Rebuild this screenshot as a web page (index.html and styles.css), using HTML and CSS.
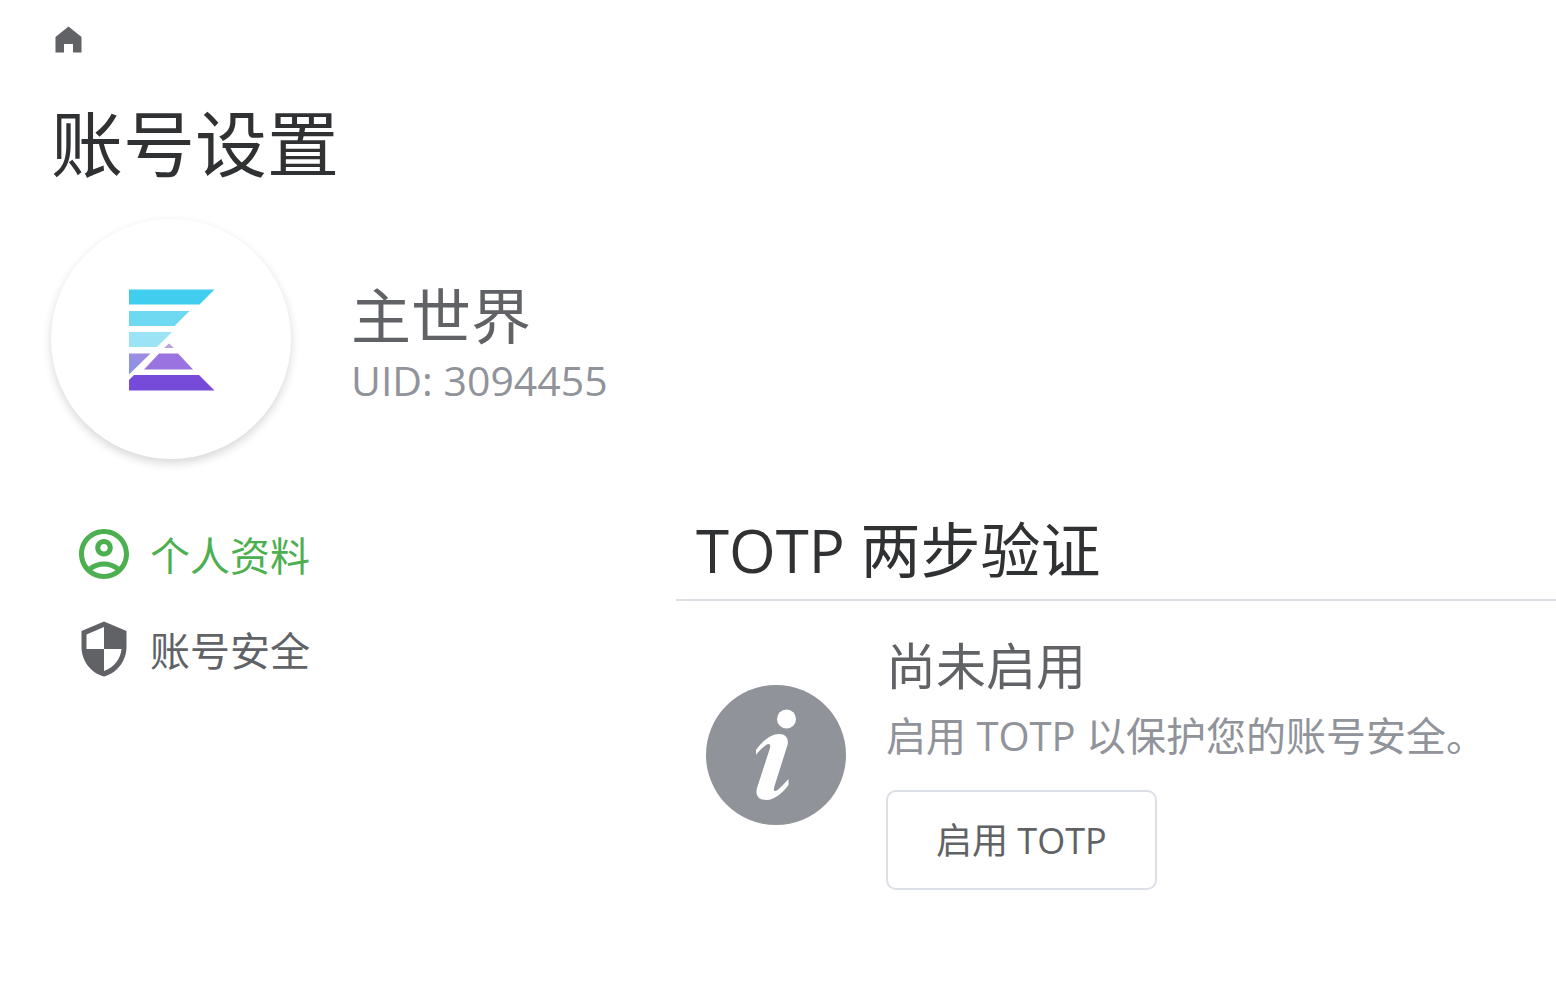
FILE: index.html
```html
<!DOCTYPE html>
<html lang="zh-CN">
<head>
<meta charset="utf-8">
<meta name="viewport" content="width=device-width, initial-scale=1">
<title>账号设置</title>
<link rel="stylesheet" href="styles.css">
</head>
<body>
<div class="page">
  <nav class="breadcrumb" aria-label="面包屑">
    <a class="home-link" href="#" aria-label="首页">
      <svg class="home-icon" viewBox="0 0 36 36" aria-hidden="true"><path d="M17.500 4.500 30.500 15v15.500h-8.500V22h-9v8.500H4.500V15z"/></svg>
    </a>
  </nav>
  <h1 class="page-title">账号设置</h1>
  <header class="profile">
    <div class="avatar">
      <svg class="avatar-logo" viewBox="0 0 240 240" role="img" aria-label="头像">
        <defs>
          <linearGradient id="violet" x1="0" y1="1" x2="1" y2="0"><stop offset="0" stop-color="#8a94e6"/><stop offset="1" stop-color="#a28be0"/></linearGradient>
        </defs>
        <path fill="#41cdee" d="M78 70.500h85.500L148.500 85.500H78z"/>
        <path fill="#6fd9f1" d="M78 92h60.500L123.500 107H78z"/>
        <path fill="#9ce4f5" d="M78 113h43L106 128H78z"/>
        <path fill="#b8a1dc" d="M118 124.500l5 4.500h-10z"/>
        <path fill="url(#violet)" d="M78 134.500h21.500L78 155.500z"/>
        <path fill="#9b73e0" d="M108 134.500h19L142 150.500H93z"/>
        <path fill="#764bd9" d="M83 156h65l15.500 15.500H78V161z"/>
      </svg>
    </div>
    <div class="identity">
      <p class="user-name">主世界</p>
      <p class="user-id">UID: 3094455</p>
    </div>
  </header>
  <div class="content">
    <nav class="menu" aria-label="账号设置菜单">
      <a class="menu-item menu-item-active" href="#" aria-current="page">
        <svg class="menu-icon" viewBox="0 0 24 24" aria-hidden="true"><path d="M12 2C6.480 2 2 6.480 2 12s4.480 10 10 10 10-4.480 10-10S17.520 2 12 2zM7.350 18.500C8.660 17.560 10.260 17 12 17s3.340.56 4.650 1.500C15.340 19.440 13.740 20 12 20s-3.340-.56-4.650-1.500zm10.790-1.380C16.450 15.800 14.320 15 12 15s-4.450.8-6.140 2.120C4.700 15.730 4 13.950 4 12c0-4.420 3.580-8 8-8s8 3.580 8 8c0 1.950-.7 3.730-1.860 5.120zM12 6c-1.930 0-3.500 1.570-3.500 3.500S10.070 13 12 13s3.500-1.570 3.500-3.500S13.930 6 12 6zm0 5c-.83 0-1.500-.67-1.500-1.500S11.170 8 12 8s1.500.67 1.500 1.500S12.830 11 12 11z"/></svg>
        <span>个人资料</span>
      </a>
      <a class="menu-item" href="#">
        <svg class="menu-icon" viewBox="0 0 60 60" aria-hidden="true"><path fill-rule="evenodd" d="M30 2.500 52.500 12V28C52.500 42 43 54 30 57.500 17 54 7.500 42 7.500 28V12zM30 8 12.500 15.500V30H30zM30 30V52C40 48.500 46.500 40 47.500 30z"/></svg>
        <span>账号安全</span>
      </a>
    </nav>
    <main class="panel">
      <h2 class="panel-title">TOTP 两步验证</h2>
      <section class="result">
        <svg class="info-icon" viewBox="0 0 140 140" aria-hidden="true">
          <circle cx="70" cy="70" r="70" fill="#909399"/>
          <circle cx="80.500" cy="34" r="9.500" fill="#fff"/>
          <path fill="#fff" d="M50 65C57 55 66 49 73 49c7 0 10 5 8.500 11L68.500 101c-1.500 5 0 6 3 4 4-3 7-7 11-11v6c-6 8-14 15-22 15-8 0-11.500-5-9.500-12L64 63c1-4-1-5-4-3-4 3-7 6-10 10z"/>
        </svg>
        <div class="result-body">
          <h3 class="result-title">尚未启用</h3>
          <p class="result-text">启用 TOTP 以保护您的账号安全。</p>
          <button class="enable-button" type="button">启用 TOTP</button>
        </div>
      </section>
    </main>
  </div>
</div>
</body>
</html>
```
FILE: styles.css
```css
* {
  box-sizing: border-box;
}

body {
  margin: 0;
  background: #fff;
  color: #606266;
  font-family: "Open Sans", "Noto Sans CJK SC", sans-serif;
  font-size: 40px;
}

h1, h2, h3, p {
  margin: 0;
  font-weight: 400;
}

a {
  color: inherit;
  text-decoration: none;
}

svg {
  display: block;
  flex: none;
  fill: currentColor;
}

.page {
  padding: 22px 0 40px 51px;
}

.breadcrumb {
  display: flex;
}

.home-icon {
  width: 36px;
  height: 36px;
}

.page-title {
  margin: 37px 0 28px;
  color: #303133;
  font-size: 72px;
  line-height: 96px;
}

.profile {
  display: flex;
  align-items: center;
  gap: 60px;
}

.avatar {
  flex: none;
  width: 240px;
  height: 240px;
  border-radius: 50%;
  background: #fff;
  box-shadow: 0 4px 10px rgba(0, 0, 0, 0.16);
}

.identity {
  padding-top: 10px;
}

.user-name {
  font-size: 60px;
  line-height: 72px;
}

.user-id {
  color: #909399;
  font-size: 41px;
  line-height: 56px;
}

.content {
  display: grid;
  grid-template-columns: 625px 1fr;
  margin-top: 47px;
}

.menu {
  display: flex;
  flex-direction: column;
  padding-left: 23px;
}

.menu-item {
  display: flex;
  align-items: center;
  gap: 16px;
  height: 95px;
}

.menu-item-active {
  color: #4caf50;
}

.menu-icon {
  width: 60px;
  height: 60px;
}

.panel-title {
  padding: 0 20px 4px;
  border-bottom: 2px solid #dcdfe6;
  color: #303133;
  font-size: 60px;
  line-height: 89px;
}

.result {
  display: flex;
  align-items: center;
  gap: 40px;
  padding: 30px;
}

.info-icon {
  width: 140px;
  height: 140px;
  margin-bottom: 12px;
}

.result-title {
  font-size: 50px;
  line-height: 70px;
}

.result-text {
  color: #909399;
  line-height: 70px;
  white-space: nowrap;
}

.enable-button {
  height: 100px;
  margin-top: 19px;
  padding: 0 48px 4px;
  border: 2px solid #dcdfe6;
  border-radius: 10px;
  background: #fff;
  color: #606266;
  font-family: inherit;
  font-size: 36px;
}
```
